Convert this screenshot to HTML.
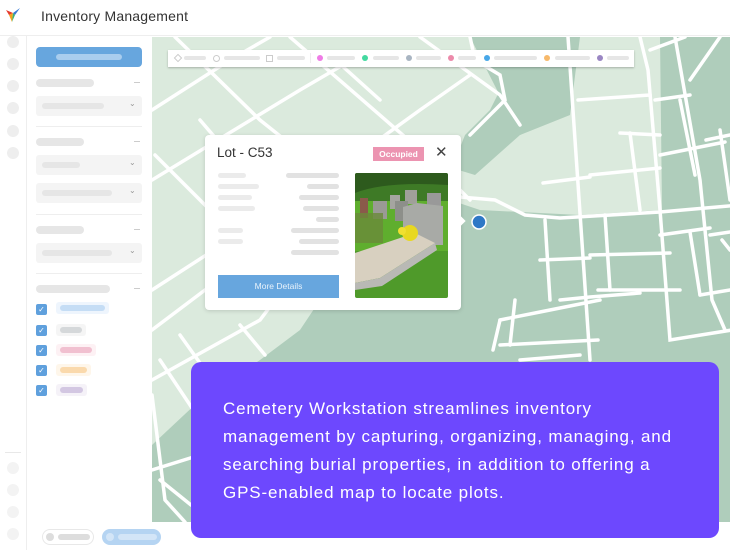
<!DOCTYPE html>
<html><head><style>
*{margin:0;padding:0;box-sizing:border-box}
body{width:730px;height:550px;overflow:hidden;background:#fff;font-family:"Liberation Sans",sans-serif;position:relative}
.a{position:absolute}
.b{position:absolute;border-radius:4px;background:#e6e6e6}
.c{position:absolute;left:7px;width:12px;height:12px;border-radius:50%;background:#eeeeee}
.sel{position:absolute;left:36px;width:106px;height:20px;background:#f4f4f4;border-radius:3px}
.chk{position:absolute;left:36px;width:11px;height:11px;background:#5fa0dd;border-radius:2px;color:#fff;font-size:8px;line-height:11px;text-align:center}
</style></head><body>
<!-- header -->
<div class="a" style="left:0;top:0;width:730px;height:36px;border-bottom:1px solid #eee"></div>
<svg class="a" style="left:5px;top:7px" width="16" height="16" viewBox="0 0 16 16"><path d="M1 3 L8 6 L4 8Z" fill="#e63b2e"/><path d="M8 6 L15 1 L10 8Z" fill="#3a7bd5"/><path d="M4 8 L8 6 L7 15Z" fill="#f4a21b"/><path d="M8 6 L10 8 L7 15Z" fill="#3bb273"/></svg>
<div class="a" style="left:41px;top:8px;font-size:14px;color:#333;letter-spacing:0.2px">Inventory Management</div>
<!-- rail -->
<div class="a" style="left:26px;top:36px;width:1px;height:514px;background:#eee"></div>
<div class="c" style="top:36px"></div><div class="c" style="top:58px"></div><div class="c" style="top:80px"></div><div class="c" style="top:102px"></div><div class="c" style="top:125px"></div><div class="c" style="top:147px"></div>
<div class="a" style="left:5px;top:452px;width:16px;height:1px;background:#e8e8e8"></div>
<div class="c" style="top:462px;background:#f3f3f3"></div><div class="c" style="top:484px;background:#f3f3f3"></div><div class="c" style="top:506px;background:#f3f3f3"></div><div class="c" style="top:528px;background:#f3f3f3"></div>
<!-- panel -->
<div class="a" style="left:36px;top:47px;width:106px;height:20px;background:#67a6de;border-radius:4px"></div>
<div class="a" style="left:56px;top:54px;width:66px;height:6px;background:#a9cdee;border-radius:3px"></div>
<div class="b" style="left:36px;top:79px;width:58px;height:8px"></div><div class="a" style="left:134px;top:82px;width:6px;height:1px;background:#ccc"></div>
<div class="sel" style="top:96px"></div><div class="b" style="left:42px;top:103px;width:62px;height:6px"></div><div class="a" style="left:129px;top:99px;font-size:8px;color:#999">⌄</div>
<div class="a" style="left:36px;top:126px;width:106px;height:1px;background:#eee"></div>
<div class="b" style="left:36px;top:138px;width:48px;height:8px"></div><div class="a" style="left:134px;top:141px;width:6px;height:1px;background:#ccc"></div>
<div class="sel" style="top:155px"></div><div class="b" style="left:42px;top:162px;width:38px;height:6px"></div><div class="a" style="left:129px;top:158px;font-size:8px;color:#999">⌄</div>
<div class="sel" style="top:183px"></div><div class="b" style="left:42px;top:190px;width:70px;height:6px"></div><div class="a" style="left:129px;top:186px;font-size:8px;color:#999">⌄</div>
<div class="a" style="left:36px;top:214px;width:106px;height:1px;background:#eee"></div>
<div class="b" style="left:36px;top:226px;width:48px;height:8px"></div><div class="a" style="left:134px;top:229px;width:6px;height:1px;background:#ccc"></div>
<div class="sel" style="top:243px"></div><div class="b" style="left:42px;top:250px;width:70px;height:6px"></div><div class="a" style="left:129px;top:246px;font-size:8px;color:#999">⌄</div>
<div class="a" style="left:36px;top:273px;width:106px;height:1px;background:#eee"></div>
<div class="b" style="left:36px;top:285px;width:74px;height:8px"></div><div class="a" style="left:134px;top:288px;width:6px;height:1px;background:#ccc"></div>
<div class="chk" style="top:304px">✓</div><div class="a" style="left:56px;top:302px;width:53px;height:12px;background:#eef5fd;border-radius:3px"></div><div class="a" style="left:60px;top:305px;width:45px;height:6px;background:#c5ddf5;border-radius:3px"></div>
<div class="chk" style="top:325px">✓</div><div class="a" style="left:56px;top:324px;width:30px;height:12px;background:#f5f5f5;border-radius:3px"></div><div class="a" style="left:60px;top:327px;width:22px;height:6px;background:#d5d8da;border-radius:3px"></div>
<div class="chk" style="top:345px">✓</div><div class="a" style="left:56px;top:344px;width:40px;height:12px;background:#fdf1f4;border-radius:3px"></div><div class="a" style="left:60px;top:347px;width:32px;height:6px;background:#f1c0d0;border-radius:3px"></div>
<div class="chk" style="top:365px">✓</div><div class="a" style="left:56px;top:364px;width:35px;height:12px;background:#fef6ea;border-radius:3px"></div><div class="a" style="left:60px;top:367px;width:27px;height:6px;background:#fad9ac;border-radius:3px"></div>
<div class="chk" style="top:385px">✓</div><div class="a" style="left:56px;top:384px;width:31px;height:12px;background:#f5f2f8;border-radius:3px"></div><div class="a" style="left:60px;top:387px;width:23px;height:6px;background:#d3c7e2;border-radius:3px"></div>
<!-- bottom pills -->
<div class="a" style="left:42px;top:529px;width:52px;height:16px;border:1px solid #e8e8e8;border-radius:8px"></div>
<div class="a" style="left:46px;top:533px;width:8px;height:8px;border-radius:50%;background:#ddd"></div><div class="a" style="left:58px;top:534px;width:32px;height:6px;border-radius:3px;background:#ddd"></div>
<div class="a" style="left:102px;top:529px;width:59px;height:16px;background:#b5d4f2;border-radius:8px"></div>
<div class="a" style="left:106px;top:533px;width:8px;height:8px;border-radius:50%;background:#d3e5f7"></div><div class="a" style="left:118px;top:534px;width:39px;height:6px;border-radius:3px;background:#d3e5f7"></div>
<!-- map -->
<svg class="a" style="left:152px;top:37px" width="578" height="485" viewBox="152 37 578 485">
<rect x="152" y="37" width="578" height="485" fill="#afcdbb"/>
<path d="M152 37 L480 37 L500 50 L505 80 L490 110 L465 135 L452 168 L475 175 L520 135 L560 115 L570 37 L660 37 L662 210 L580 215 L480 210 L450 200 L400 240 L320 300 L300 330 L260 360 L200 400 L152 445Z" fill="#dbeadd"/>
<path d="M520 135 L570 115 L580 37 L470 37Z" fill="#afcdbb"/>
<g stroke="#fff" stroke-width="3.5" fill="none" stroke-linecap="round">
<path d="M152 110 L230 60 L270 37"/><path d="M152 180 L300 90 L360 55"/><path d="M152 290 L330 175 L420 110 L470 75"/>
<path d="M175 37 L260 120 L310 160"/><path d="M200 120 L290 225"/><path d="M155 155 L240 240"/><path d="M290 37 L420 150 L470 200"/>
<path d="M330 55 L380 100"/><path d="M420 37 L500 95 L520 125"/><path d="M152 330 L205 290"/><path d="M152 380 L260 320 L305 260"/>
<path d="M160 360 L200 420"/><path d="M180 335 L255 440"/><path d="M240 325 L265 355"/><path d="M152 470 L200 455"/><path d="M152 395 L165 500 L185 522"/><path d="M160 480 L191 505"/>
<path d="M470 37 L475 60 L500 75 L505 100 L485 120 L470 135"/>
<path d="M460 197 L495 200 L525 215 L560 218 L660 212 L740 205"/>
<path d="M568 37 L590 360"/><path d="M578 100 L650 95"/><path d="M640 37 L648 70 L660 210 L670 340 L732 330"/>
<path d="M650 50 L685 37"/><path d="M655 100 L690 95"/><path d="M660 155 L725 142"/><path d="M680 100 L695 175"/>
<path d="M690 80 L720 37"/><path d="M675 37 L700 180 L712 300 L725 330"/><path d="M706 140 L730 135"/><path d="M720 130 L730 200"/>
<path d="M620 133 L660 135"/><path d="M630 133 L640 210"/><path d="M590 175 L660 168"/><path d="M543 183 L590 177"/>
<path d="M660 235 L710 228"/><path d="M690 232 L700 295"/><path d="M710 235 L730 232"/><path d="M722 240 L730 250"/>
<path d="M545 220 L550 300"/><path d="M540 260 L590 258"/><path d="M590 255 L670 253"/><path d="M605 215 L610 290"/>
<path d="M598 290 L680 290"/><path d="M560 300 L590 297 L640 293"/><path d="M500 320 L540 312 L600 300"/><path d="M515 300 L510 345"/>
<path d="M500 320 L493 350"/><path d="M500 345 L598 340"/><path d="M520 360 L580 355"/><path d="M700 295 L730 290"/>
</g>
<circle cx="479" cy="222" r="7" fill="#2e78c6" stroke="#fff" stroke-width="1.5"/>
</svg>
<!-- legend -->
<div class="a" style="left:168px;top:50px;width:466px;height:17px;background:#fff;box-shadow:0 1px 2px rgba(0,0,0,.25)"></div>
<div class="a" style="left:175px;top:55px;width:6px;height:6px;border:1px solid #ccc;transform:rotate(45deg)"></div><div class="b" style="left:184px;top:56px;width:22px;height:4px"></div>
<div class="a" style="left:213px;top:55px;width:7px;height:7px;border:1px solid #ccc;border-radius:50%"></div><div class="b" style="left:224px;top:56px;width:36px;height:4px"></div>
<div class="a" style="left:266px;top:55px;width:7px;height:7px;border:1px solid #ccc"></div><div class="b" style="left:277px;top:56px;width:28px;height:4px"></div>
<div class="a" style="left:310px;top:53px;width:1px;height:10px;background:#eee"></div>
<div class="a" style="left:317px;top:55px;width:6px;height:6px;border-radius:50%;background:#ef7ce6"></div><div class="b" style="left:327px;top:56px;width:28px;height:4px"></div>
<div class="a" style="left:362px;top:55px;width:6px;height:6px;border-radius:50%;background:#43d9a0"></div><div class="b" style="left:373px;top:56px;width:26px;height:4px"></div>
<div class="a" style="left:406px;top:55px;width:6px;height:6px;border-radius:50%;background:#a9b5c2"></div><div class="b" style="left:416px;top:56px;width:25px;height:4px"></div>
<div class="a" style="left:448px;top:55px;width:6px;height:6px;border-radius:50%;background:#ec8aaa"></div><div class="b" style="left:458px;top:56px;width:18px;height:4px"></div>
<div class="a" style="left:484px;top:55px;width:6px;height:6px;border-radius:50%;background:#47a7e8"></div><div class="b" style="left:494px;top:56px;width:43px;height:4px"></div>
<div class="a" style="left:544px;top:55px;width:6px;height:6px;border-radius:50%;background:#f7b96b"></div><div class="b" style="left:555px;top:56px;width:35px;height:4px"></div>
<div class="a" style="left:597px;top:55px;width:6px;height:6px;border-radius:50%;background:#9a86c3"></div><div class="b" style="left:607px;top:56px;width:22px;height:4px"></div>
<!-- popup -->
<div class="a" style="left:205px;top:135px;width:256px;height:175px;background:#fff;border-radius:4px;box-shadow:0 1px 4px rgba(0,0,0,.15)"></div>
<div class="a" style="left:456px;top:217px;width:8px;height:8px;background:#fff;transform:rotate(45deg)"></div>
<div class="a" style="left:217px;top:145px;font-size:13.5px;color:#333">Lot - C53</div>
<div class="a" style="left:373px;top:147px;width:51px;height:14px;background:#ec94b1;color:#fff;font-size:8.5px;font-weight:bold;line-height:14px;text-align:center">Occupied</div>
<div class="a" style="left:435px;top:143px;font-size:15px;color:#444">✕</div>
<div class="b" style="left:218px;top:173px;width:28px;height:5px;background:#ebebeb"></div><div class="b" style="left:286px;top:173px;width:53px;height:5px;background:#e2e2e2"></div>
<div class="b" style="left:218px;top:184px;width:41px;height:5px;background:#ebebeb"></div><div class="b" style="left:307px;top:184px;width:32px;height:5px;background:#e2e2e2"></div>
<div class="b" style="left:218px;top:195px;width:34px;height:5px;background:#ebebeb"></div><div class="b" style="left:299px;top:195px;width:40px;height:5px;background:#e2e2e2"></div>
<div class="b" style="left:218px;top:206px;width:37px;height:5px;background:#ebebeb"></div><div class="b" style="left:303px;top:206px;width:36px;height:5px;background:#e2e2e2"></div>
<div class="b" style="left:316px;top:217px;width:23px;height:5px;background:#e2e2e2"></div>
<div class="b" style="left:218px;top:228px;width:25px;height:5px;background:#ebebeb"></div><div class="b" style="left:291px;top:228px;width:48px;height:5px;background:#e2e2e2"></div>
<div class="b" style="left:218px;top:239px;width:25px;height:5px;background:#ebebeb"></div><div class="b" style="left:299px;top:239px;width:40px;height:5px;background:#e2e2e2"></div>
<div class="b" style="left:291px;top:250px;width:48px;height:5px;background:#e2e2e2"></div>
<div class="a" style="left:218px;top:275px;width:121px;height:23px;background:#67a6de;color:#e8f2fb;font-size:8.5px;line-height:23px;text-align:center">More Details</div>
<svg class="a" style="left:355px;top:173px;border-radius:2px" width="93" height="125" viewBox="0 0 93 125">
<rect width="93" height="125" fill="#4f9a2a"/>
<rect width="93" height="28" fill="#2d5a1d"/>
<path d="M0 20 Q30 8 93 12 L93 30 L0 32Z" fill="#3e7a26"/>
<rect x="0" y="28" width="93" height="50" fill="#5fae2e"/>
<rect x="5" y="25" width="8" height="20" fill="#8a5a4a"/><rect x="18" y="28" width="14" height="18" fill="#9a9a95"/><rect x="35" y="22" width="10" height="14" fill="#a5a5a0"/><rect x="50" y="17" width="12" height="14" fill="#a0a09a"/><rect x="72" y="20" width="14" height="14" fill="#999"/>
<rect x="40" y="28" width="13" height="20" fill="#8d8f8a"/>
<path d="M48 34 L62 30 L88 33 L88 72 L48 72Z" fill="#a8aaa6"/>
<rect x="0" y="40" width="28" height="30" fill="#6a8a3a" opacity=".8"/>
<path d="M0 80 L60 60 L80 70 L25 105 L0 110Z" fill="#d8d0c0"/>
<path d="M0 110 L25 105 L80 70 L82 77 L27 113 L0 117Z" fill="#b9b9b5"/>
<circle cx="55" cy="60" r="8" fill="#e8d820"/><circle cx="47" cy="58" r="4" fill="#f0e030"/>
</svg>
<!-- purple box -->
<div class="a" style="left:191px;top:362px;width:528px;height:176px;background:#6d48fe;border-radius:10px"></div>
<div class="a" style="left:223px;top:395px;width:490px;color:#fff;font-size:17px;line-height:28px;letter-spacing:0.85px;white-space:nowrap">Cemetery Workstation streamlines inventory<br>management by capturing, organizing, managing, and<br>searching burial properties, in addition to offering a<br>GPS-enabled map to locate plots.</div>
</body></html>
